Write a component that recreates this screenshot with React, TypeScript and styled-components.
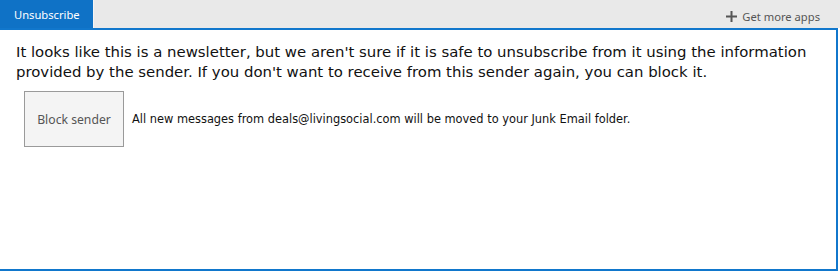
import React from "react";
import styled, { createGlobalStyle } from "styled-components";

const Global = createGlobalStyle`
  html, body { margin: 0; padding: 0; background: #fff; }
  body { font-family: "DejaVu Sans", Verdana, sans-serif; }
`;

const Page = styled.div`
  width: 840px;
  height: 274px;
  display: flex;
  flex-direction: column;
`;

const TabBar = styled.div`
  height: 28px;
  display: flex;
  align-items: stretch;
  background: #e9e9e9;
`;

const Tab = styled.div`
  width: 94px;
  background: #0f72c6;
  color: #fff;
  font-family: "Noto Sans", sans-serif;
  font-size: 11.2px;
  display: flex;
  align-items: center;
  padding-left: 14px;
  box-sizing: border-box;
  border-right: 1px solid #f4f4f4;
`;

const Spacer = styled.div`
  flex: 1;
`;

const MoreApps = styled.div`
  display: flex;
  align-items: center;
  gap: 5px;
  color: #555;
  font-family: "Noto Sans", sans-serif;
  font-size: 11.2px;
  padding-right: 20px;
  padding-top: 4px;
`;

const Panel = styled.div`
  width: 838px;
  height: 243px;
  box-sizing: border-box;
  border-top: 2px solid #1177cc;
  border-right: 2px solid #1177cc;
  border-bottom: 2px solid #1177cc;
  padding: 12px 16px 0 16px;
`;

const Intro = styled.p`
  margin: 0;
  font-size: 14.9px;
  line-height: 20px;
  color: #111;
`;

const ActionRow = styled.div`
  display: flex;
  align-items: center;
  gap: 8px;
  margin-top: 9px;
  padding-left: 8px;
`;

const BlockButton = styled.button`
  width: 100px;
  height: 56px;
  background: #f4f4f4;
  border: 1px solid #9a9a9a;
  color: #555;
  font-family: "Noto Sans", sans-serif;
  font-size: 12.2px;
  padding: 0;
`;

const Note = styled.span`
  font-size: 11.4px;
  color: #111;
`;

export default function App() {
  return (
    <>
      <Global />
      <Page>
        <TabBar>
          <Tab>Unsubscribe</Tab>
          <Spacer />
          <MoreApps>
            <svg width="11" height="11" viewBox="0 0 11 11">
              <path d="M5.5 0v11M0 5.5h11" stroke="#555" strokeWidth="2" />
            </svg>
            Get more apps
          </MoreApps>
        </TabBar>
        <Panel>
          <Intro>
            It looks like this is a newsletter, but we aren't sure if it is safe to unsubscribe from it using the
            information provided by the sender. If you don't want to receive from this sender again, you can block it.
          </Intro>
          <ActionRow>
            <BlockButton>Block sender</BlockButton>
            <Note>All new messages from deals@livingsocial.com will be moved to your Junk Email folder.</Note>
          </ActionRow>
        </Panel>
      </Page>
    </>
  );
}
